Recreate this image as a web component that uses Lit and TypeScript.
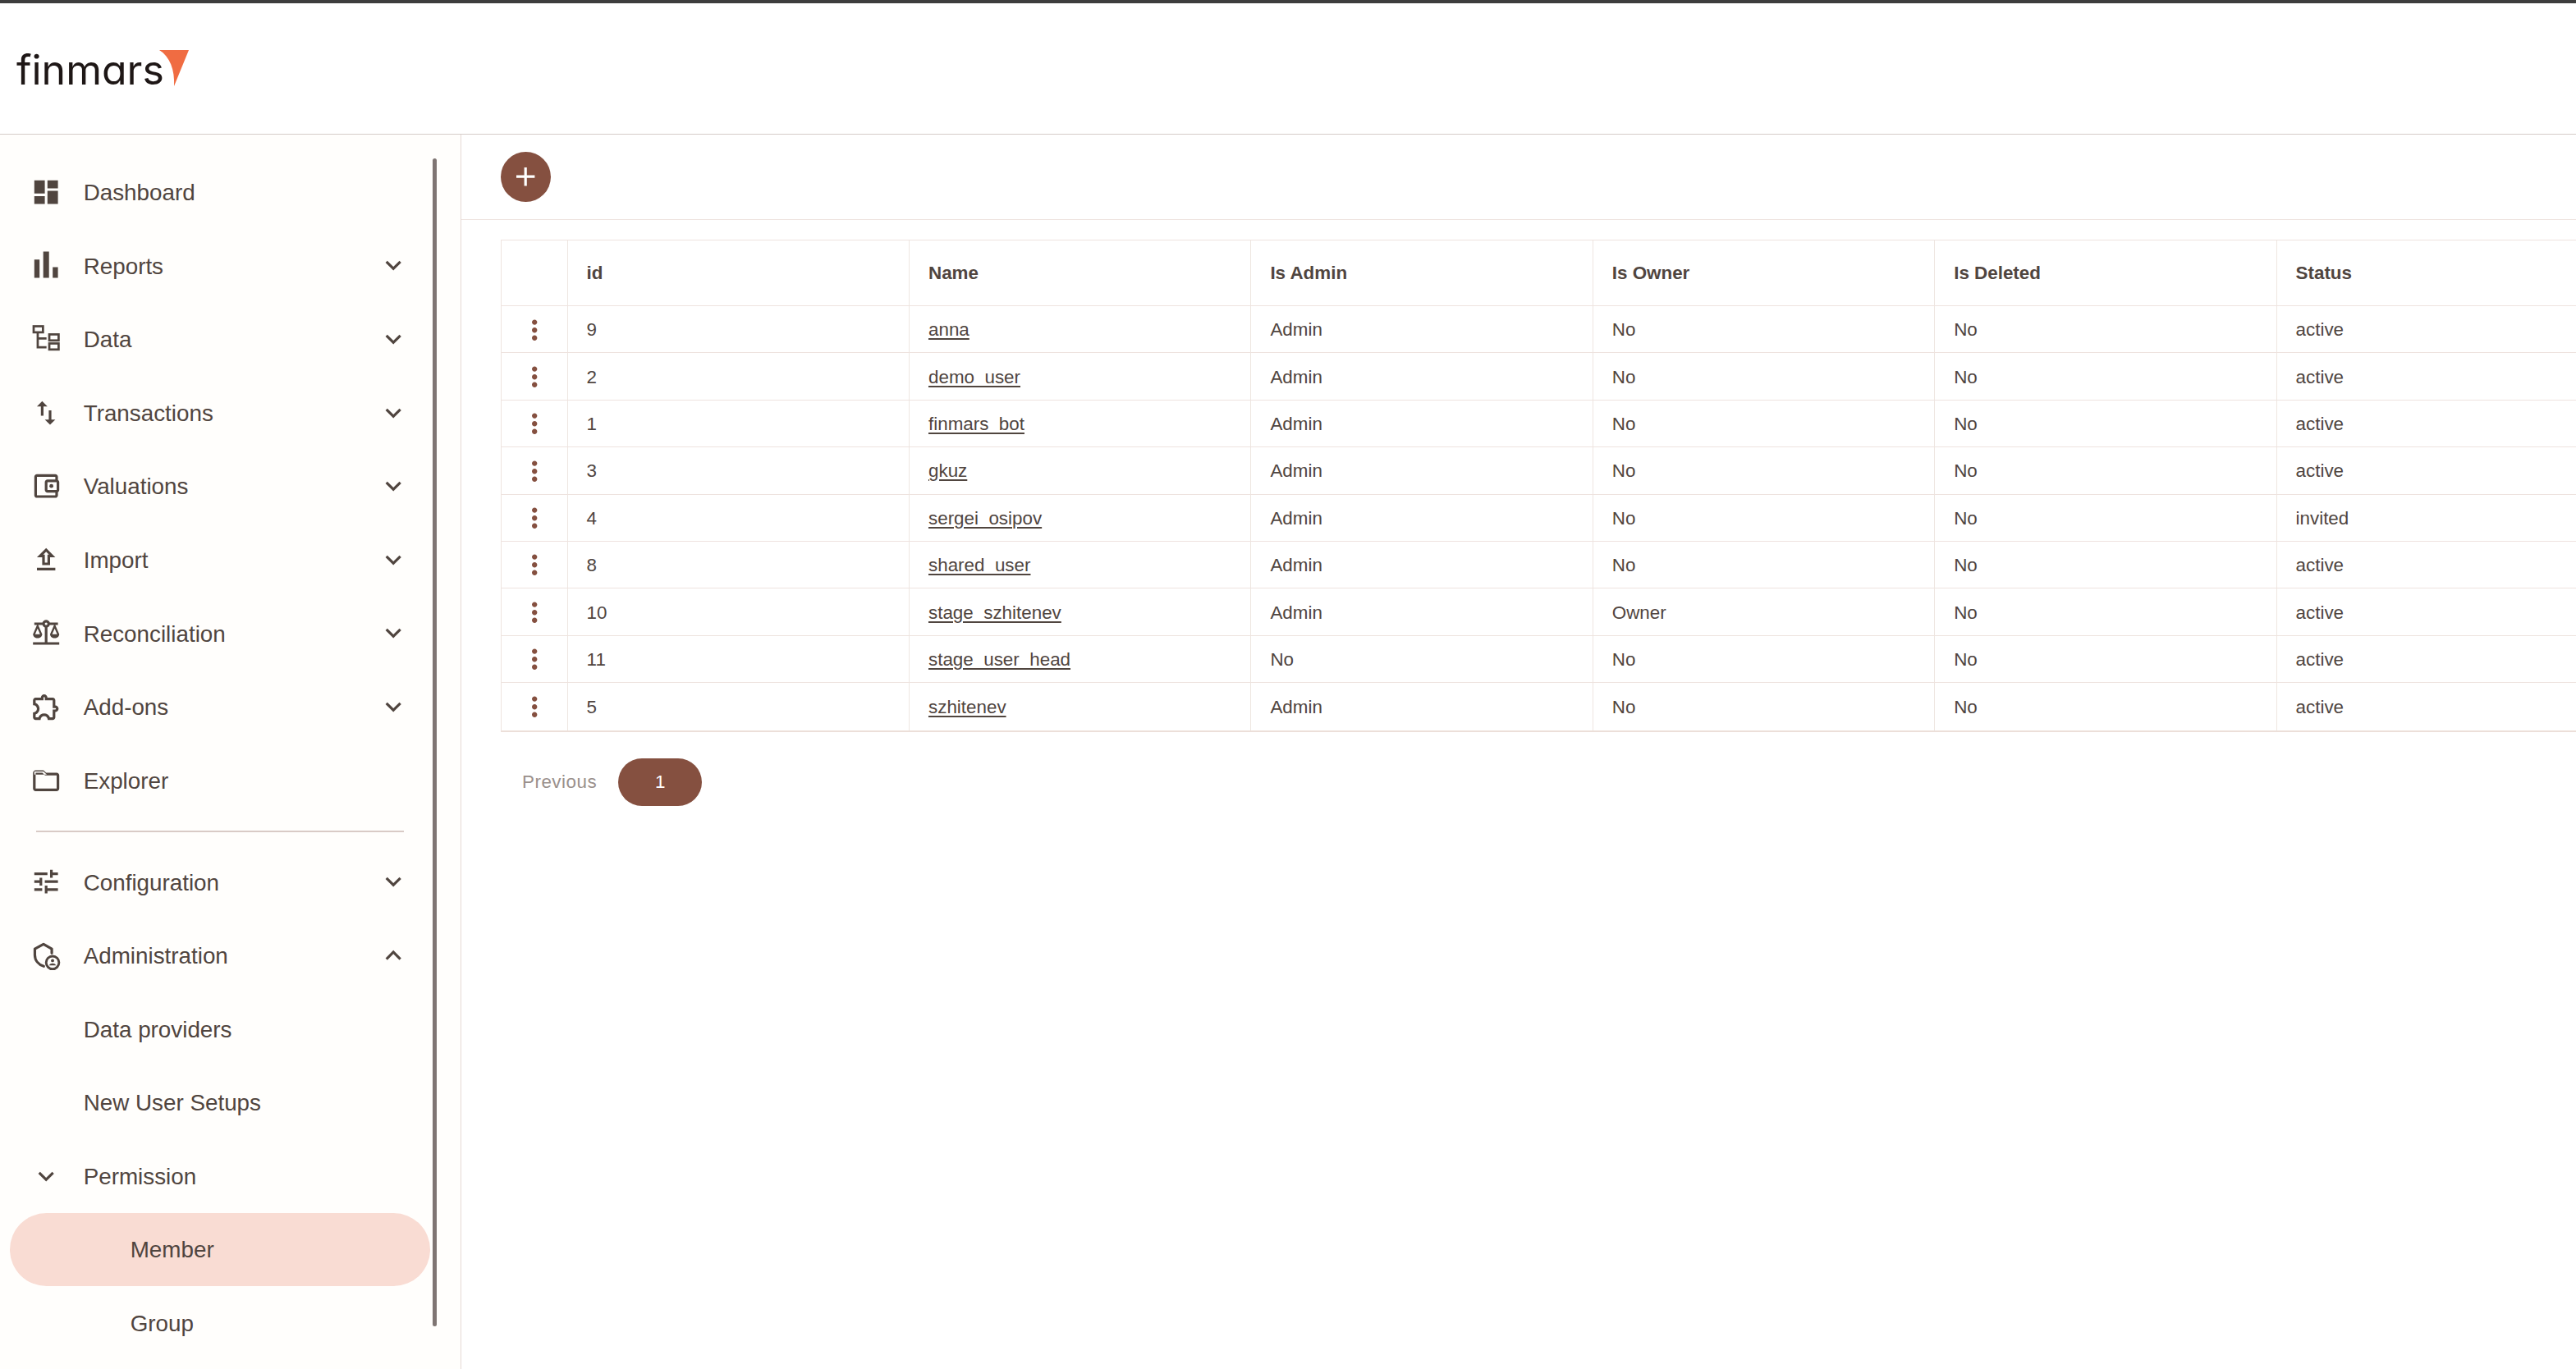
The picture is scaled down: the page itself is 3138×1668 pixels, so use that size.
import { LitElement, html, css, svg } from "lit";
import { customElement } from "lit/decorators.js";

const P = (d: string) => svg`<path d=${d}></path>`;
const ICONS: Record<string, unknown> = {
  dashboard: P("M3 13h8V3H3v10zm0 8h8v-6H3v6zm10 0h8V11h-8v10zm0-18v6h8V3h-8z"),
  bar: P("M3 7.6h4v14H3zM9.8 1.6h4.4v20H9.8zM17 13.5h4v8.1h-4z"),
  data: svg`<g fill="none" stroke="currentColor" stroke-width="1.7"><rect x="2.5" y="2.2" width="7.1" height="4.6"></rect><path d="M5.6 6.8V18.2H12.3M5.6 11.5H12.3"></path><rect x="14.4" y="8.4" width="7.1" height="4.6"></rect><rect x="14.4" y="15.3" width="7.1" height="4.6"></rect></g>`,
  swap: P("M16 17.01V10h-2v7.01h-3L15 21l4-3.99h-3zM9 3L5 6.99h3V14h2V6.99h3L9 3z"),
  wallet: svg`${P("M21 7.28V5c0-1.1-.9-2-2-2H5c-1.11 0-2 .9-2 2v14c0 1.1.89 2 2 2h14c1.1 0 2-.9 2-2v-2.28c.59-.35 1-.98 1-1.72V9c0-.74-.41-1.38-1-1.72zM20 9v6h-7V9h7zM5 19V5h14v2h-6c-1.1 0-2 .9-2 2v6c0 1.1.9 2 2 2h6v2H5z")}<circle cx="16" cy="12" r="1.5"></circle>`,
  upload: P("M9 16h6v-6h4l-7-7-7 7h4v6zm3-10.17L14.17 8H13v6h-2V8H9.83L12 5.83zM5 18h14v2H5z"),
  balance: P("M13 7.83c.85-.3 1.53-.98 1.83-1.83H18l-3 7c0 1.66 1.57 3 3.5 3s3.5-1.34 3.5-3l-3-7h2V4h-6.17c-.41-1.17-1.52-2-2.83-2s-2.42.83-2.83 2H3v2h2l-3 7c0 1.66 1.57 3 3.5 3S9 14.66 9 13L6 6h3.17c.3.85.98 1.53 1.83 1.83V19H2v2h20v-2h-9V7.83zM20.37 13h-3.74l1.87-4.36L20.37 13zm-13 0H3.63L5.5 8.64 7.37 13zM12 6c-.55 0-1-.45-1-1s.45-1 1-1 1 .45 1 1-.45 1-1 1z"),
  extension: P("M10.5 4.5c.28 0 .5.22.5.5v2h6v6h2c.28 0 .5.22.5.5s-.22.5-.5.5h-2v6h-2.12c-.68-1.75-2.39-3-4.38-3s-3.7 1.25-4.38 3H4v-2.12c1.75-.68 3-2.39 3-4.38 0-1.99-1.24-3.7-2.99-4.38L4 7h6V5c0-.28.22-.5.5-.5m0-2C9.12 2.5 8 3.62 8 5H4c-1.1 0-1.99.9-1.99 2v3.8h.29c1.49 0 2.7 1.21 2.7 2.7s-1.21 2.7-2.7 2.7H2V20c0 1.1.9 2 2 2h3.8v-.3c0-1.49 1.21-2.7 2.7-2.7s2.7 1.21 2.7 2.7v.3H17c1.1 0 2-.9 2-2v-4c1.38 0 2.5-1.12 2.5-2.5S20.38 11 19 11V7c0-1.1-.9-2-2-2h-4c0-1.38-1.12-2.5-2.5-2.5z"),
  folder: P("M9.17 6l2 2H20v10H4V6h5.17M10 4H4c-1.1 0-1.99.9-1.99 2L2 18c0 1.1.9 2 2 2h16c1.1 0 2-.9 2-2V8c0-1.1-.9-2-2-2h-8l-2-2zM3 5h7l2.5 2.4H3z"),
  tune: P("M3 17v2h6v-2H3zM3 5v2h10V5H3zm10 16v-2h8v-2h-8v-2h-2v6h2zM7 9v2H3v2h4v2h2V9H7zm14 4v-2H11v2h10zm-6-4h2V7h4V5h-4V3h-2v6z"),
  admin: svg`<path fill="none" stroke="currentColor" stroke-width="2" stroke-linecap="round" stroke-linejoin="round" d="M16.3 10.2V7L10 3.4 3.4 7v4.6c0 4 2.6 7.4 6.8 8.6"></path><circle cx="16.9" cy="17.4" r="4.9" fill="none" stroke="currentColor" stroke-width="1.8"></circle><circle cx="16.9" cy="15.9" r="1.2"></circle><path d="M14.3 19.5c.5-1 1.5-1.5 2.6-1.5s2.1.5 2.6 1.5z"></path>`,
  more: P("M16.59 8.59L12 13.17 7.41 8.59 6 10l6 6 6-6z"),
  less: P("M12 8l-6 6 1.41 1.41L12 10.83l4.59 4.58L18 14z"),
  dots: P("M12 8c1.1 0 2-.9 2-2s-.9-2-2-2-2 .9-2 2 .9 2 2 2zm0 2c-1.1 0-2 .9-2 2s.9 2 2 2 2-.9 2-2-.9-2-2-2zm0 6c-1.1 0-2 .9-2 2s.9 2 2 2 2-.9 2-2-.9-2-2-2z"),
  add: P("M19 13h-6v6h-2v-6H5v-2h6V5h2v6h6v2z"),
};

const icon = (name: string) =>
  html`<svg class="ic" viewBox="0 0 24 24" fill="currentColor" aria-hidden="true">${ICONS[name]}</svg>`;

type Nav = { label: string; icon?: string; chev?: string; sub?: boolean; active?: boolean };

const NAV_TOP: Nav[] = [
  { label: "Dashboard", icon: "dashboard" },
  { label: "Reports", icon: "bar", chev: "more" },
  { label: "Data", icon: "data", chev: "more" },
  { label: "Transactions", icon: "swap", chev: "more" },
  { label: "Valuations", icon: "wallet", chev: "more" },
  { label: "Import", icon: "upload", chev: "more" },
  { label: "Reconciliation", icon: "balance", chev: "more" },
  { label: "Add-ons", icon: "extension", chev: "more" },
  { label: "Explorer", icon: "folder" },
];
const NAV_BOTTOM: Nav[] = [
  { label: "Configuration", icon: "tune", chev: "more" },
  { label: "Administration", icon: "admin", chev: "less" },
  { label: "Data providers" },
  { label: "New User Setups" },
  { label: "Permission", icon: "more" },
  { label: "Member", sub: true, active: true },
  { label: "Group", sub: true },
];

const HEADERS = ["id", "Name", "Is Admin", "Is Owner", "Is Deleted", "Status"];
const ROWS: string[][] = [
  ["9", "anna", "Admin", "No", "No", "active"],
  ["2", "demo_user", "Admin", "No", "No", "active"],
  ["1", "finmars_bot", "Admin", "No", "No", "active"],
  ["3", "gkuz", "Admin", "No", "No", "active"],
  ["4", "sergei_osipov", "Admin", "No", "No", "invited"],
  ["8", "shared_user", "Admin", "No", "No", "active"],
  ["10", "stage_szhitenev", "Admin", "Owner", "No", "active"],
  ["11", "stage_user_head", "No", "No", "No", "active"],
  ["5", "szhitenev", "Admin", "No", "No", "active"],
];

@customElement("app-root")
export class AppRoot extends LitElement {
  static styles = css`
    :host {
      display: block;
      width: 3138px;
      height: 1668px;
      overflow: hidden;
      background: #fff;
      color: #50453f;
      font-family: "Liberation Sans", Arial, sans-serif;
    }
    .page { display: flex; flex-direction: column; height: 100%; border-top: 4px solid #3d3d3d; box-sizing: border-box; }
    .head {
      flex: 0 0 160px;
      box-sizing: border-box;
      border-bottom: 1px solid #d5ccc8;
      display: flex;
      align-items: flex-start;
      padding: 57px 0 0 20px;
    }
    .logo { display: flex; align-items: flex-start; color: #1e1716; }
    .logo-text {
      font-family: Inter, sans-serif;
      font-feature-settings: "cv11" 1;
      font-size: 50px;
      line-height: 48px;
      font-weight: 400;
    }
    .logo svg { width: 36px; height: 44px; margin-left: -6px; flex: none; }
    .body { flex: 1; display: flex; min-height: 0; }
    .side {
      position: relative;
      flex: 0 0 562px;
      box-sizing: border-box;
      border-right: 1px solid #e6d9d6;
      background: #fffefc;
      padding-top: 25.2px;
      overflow: hidden;
    }
    .thumb { position: absolute; left: 527px; top: 29px; width: 5px; height: 1423px; border-radius: 3px; background: #7f7573; }
    .item {
      display: flex;
      align-items: center;
      height: 89.6px;
      margin: 0 37px 0 12px;
      padding: 0 25.3px;
      box-sizing: border-box;
      border-radius: 45px;
      font-size: 27.8px;
      white-space: nowrap;
    }
    .item.active { background: #f9dcd3; }
    .slot { flex: 0 0 38.4px; height: 38.4px; margin-right: 26px; }
    .item.sub .label { padding-left: 57px; }
    .label { flex: 1; padding-top: 2px; }
    .ic { display: block; width: 38.4px; height: 38.4px; }
    .chev { flex: 0 0 38.4px; height: 38.4px; }
    .rule { height: 2px; margin: 16.6px 69px 15.6px 44px; background: #d9cbc6; }
    .main { flex: 1; min-width: 0; overflow: hidden; }
    .bar {
      height: 104px;
      box-sizing: border-box;
      border-bottom: 1px solid #eee3df;
      display: flex;
      align-items: center;
      padding-left: 48px;
    }
    .fab {
      width: 61px;
      height: 61px;
      border-radius: 50%;
      background: #855040;
      color: #fff;
      display: flex;
      align-items: center;
      justify-content: center;
    }
    .table {
      width: 2580px;
      margin: 24px 0 0 48px;
      border-top: 1px solid #eee3df;
      border-left: 1px solid #eee3df;
      border-bottom: 2px solid #ecdfd9;
      font-size: 22.4px;
    }
    .row {
      display: grid;
      grid-template-columns: 80.6px repeat(6, 416.4px);
      height: 57.4px;
      box-sizing: border-box;
      border-bottom: 1px solid #eee3df;
    }
    .row:last-child { border-bottom: 0; }
    .row.th { height: 80px; font-weight: 700; }
    .cell {
      display: flex;
      align-items: center;
      padding: 2px 0 0 23px;
      border-right: 1px solid #eee6e1;
      white-space: nowrap;
      min-width: 0;
      box-sizing: border-box;
    }
    .row.th .cell { padding-top: 0; }
    .cell.act { padding: 1px 0 0; justify-content: center; color: #855040; }
    a { color: inherit; text-decoration: underline; text-decoration-thickness: 2px; text-underline-offset: 3px; }
    .pager { display: flex; align-items: center; margin: 32px 0 0 48px; font-size: 22.4px; }
    .prev { padding: 0 26px; color: #9a908c; letter-spacing: 0.5px; }
    .page-btn {
      width: 102px;
      height: 58px;
      border-radius: 29px;
      background: #855040;
      color: #fff;
      display: flex;
      align-items: center;
      justify-content: center;
    }
  `;

  private navItem(n: Nav) {
    return html`<div class="item ${n.sub ? "sub" : ""} ${n.active ? "active" : ""}">
      <div class="slot">${n.icon ? icon(n.icon) : ""}</div>
      <div class="label">${n.label}</div>
      ${n.chev ? html`<div class="chev">${icon(n.chev)}</div>` : ""}
    </div>`;
  }

  render() {
    return html`<div class="page">
      <header class="head">
        <div class="logo">
          <span class="logo-text">finmars</span>
          <svg viewBox="0 0 36 44" aria-hidden="true"><path fill="#f06c42" d="M0 0H36L18 44C19 24 13 8 0 0Z"></path></svg>
        </div>
      </header>
      <div class="body">
        <nav class="side">
          ${NAV_TOP.map((n) => this.navItem(n))}
          <div class="rule"></div>
          ${NAV_BOTTOM.map((n) => this.navItem(n))}
          <div class="thumb"></div>
        </nav>
        <main class="main">
          <div class="bar"><div class="fab">${icon("add")}</div></div>
          <div class="table">
            <div class="row th">
              <div class="cell act"></div>
              ${HEADERS.map((h) => html`<div class="cell">${h}</div>`)}
            </div>
            ${ROWS.map(
              (r) => html`<div class="row">
                <div class="cell act">${icon("dots")}</div>
                ${r.map((v, i) => html`<div class="cell">${i === 1 ? html`<a>${v}</a>` : v}</div>`)}
              </div>`
            )}
          </div>
          <div class="pager">
            <div class="prev">Previous</div>
            <div class="page-btn">1</div>
          </div>
        </main>
      </div>
    </div>`;
  }
}
